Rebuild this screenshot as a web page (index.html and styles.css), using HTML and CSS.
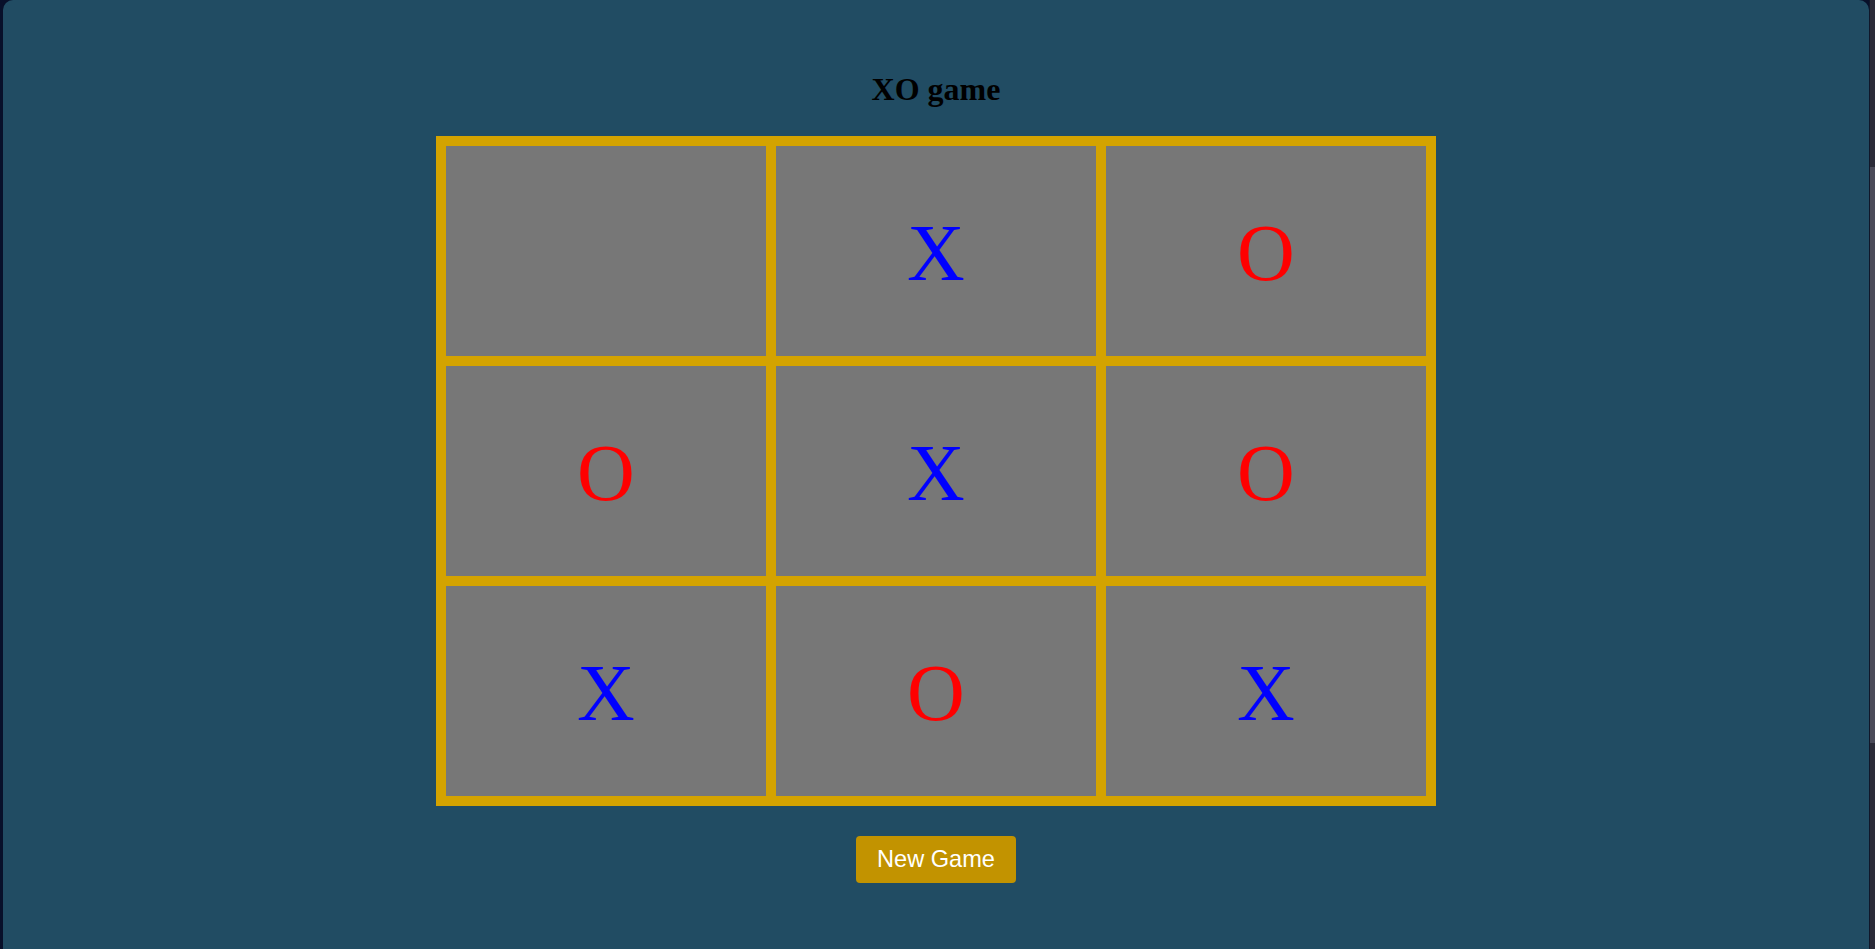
FILE: index.html
```html
<!DOCTYPE html>
<html lang="en">
<head>
<meta charset="utf-8">
<title>XO game</title>
<link rel="stylesheet" href="styles.css">
</head>
<body>
<div class="frame">
  <main class="panel">
    <h1 class="title">XO game</h1>
    <div class="board">
      <div class="cell"></div>
      <div class="cell x">X</div>
      <div class="cell o">O</div>
      <div class="cell o">O</div>
      <div class="cell x">X</div>
      <div class="cell o">O</div>
      <div class="cell x">X</div>
      <div class="cell o">O</div>
      <div class="cell x">X</div>
    </div>
    <button class="new-game" type="button">New Game</button>
  </main>
  <div class="divider"></div>
  <div class="scrollbar"><div class="thumb"></div></div>
</div>
</body>
</html>
```
FILE: styles.css
```css
html, body {
  margin: 0;
  padding: 0;
  height: 100%;
}
body {
  background: #08102a;
  overflow: hidden;
}
.frame {
  display: flex;
  height: 949px;
  padding-left: 3px;
}
.panel {
  flex: 1;
  background: #214c63;
  border-radius: 10px 10px 0 0;
  display: flex;
  flex-direction: column;
  align-items: center;
  padding-top: 71px;
}
.title {
  margin: 0 0 29px;
  font-family: "Liberation Serif", "Times New Roman", serif;
  font-weight: bold;
  font-size: 32px;
  line-height: 36px;
  color: #000;
}
.board {
  display: grid;
  grid-template-columns: repeat(3, 320px);
  grid-auto-rows: 210px;
  gap: 10px;
  padding: 10px;
  background: #d4a300;
}
.cell {
  background: #777777;
  display: flex;
  align-items: center;
  justify-content: center;
  padding-top: 4px;
  box-sizing: border-box;
  font-family: "Liberation Serif", "Times New Roman", serif;
  font-size: 80px;
}
.cell.x { color: #0000ff; }
.cell.o { color: #ff0000; }
.new-game {
  margin-top: 30px;
  width: 160px;
  height: 47px;
  padding: 0;
  border: none;
  border-radius: 4px;
  background: #c29300;
  color: #fff;
  font-family: "Liberation Sans", Arial, sans-serif;
  font-size: 23.6px;
  cursor: pointer;
}
.divider {
  width: 1px;
  background: #10172a;
}
.scrollbar {
  width: 5px;
  background: #2b2b38;
  display: flex;
  flex-direction: column;
}
.thumb {
  margin-top: 167px;
  height: 576px;
  background: #4a4a58;
}
```
